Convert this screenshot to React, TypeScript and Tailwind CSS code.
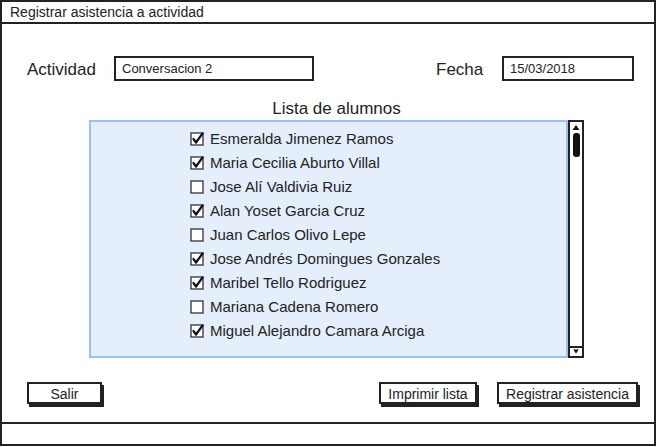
import { useState } from "react";

const alumnos: [string, boolean][] = [
  ["Esmeralda Jimenez Ramos", true],
  ["Maria Cecilia Aburto Villal", true],
  ["Jose Alí Valdivia Ruiz", false],
  ["Alan Yoset Garcia Cruz", true],
  ["Juan Carlos Olivo Lepe", false],
  ["Jose Andrés Domingues Gonzales", true],
  ["Maribel Tello Rodriguez", true],
  ["Mariana Cadena Romero", false],
  ["Miguel Alejandro Camara Arciga", true],
];

function Check({ on }: { on: boolean }) {
  return (
    <svg width="14" height="14" viewBox="0 0 14 14" className="shrink-0">
      <rect x="1" y="1" width="12" height="12" fill="#fff" stroke="#333" strokeWidth="1.3" />
      {on ? (
        <path d="M3.5 7 L6 10.5 L12.5 1.5" fill="none" stroke="#111" strokeWidth="2.2" strokeLinecap="round" strokeLinejoin="round" />
      ) : null}
    </svg>
  );
}

function Btn({ label, w }: { label: string; w: string }) {
  return (
    <button
      type="button"
      className={`${w} h-[22px] border-2 border-[#222] bg-white text-[14px] text-[#222] shadow-[2px_3px_0_#222]`}
    >
      {label}
    </button>
  );
}

export default function App() {
  const [lista, setLista] = useState(alumnos);

  return (
    <div className="flex h-[446px] w-[656px] flex-col border-2 border-[#222] bg-white font-['Liberation_Sans',Arial,sans-serif] text-[#222]">
      <div className="flex h-[22px] shrink-0 items-center border-b-2 border-[#222] pl-[8px] text-[14px]">
        Registrar asistencia a actividad
      </div>

      <main className="flex flex-1 flex-col">
        <div className="mt-[32px] flex h-[25px] items-center">
          <span className="ml-[25px] w-[87px] pt-[3px] text-[17px]">Actividad</span>
          <div className="flex h-[25px] w-[200px] items-center border-2 border-[#222] pl-[6px] text-[13px]">
            Conversacion 2
          </div>
          <span className="ml-[122px] w-[66px] pt-[3px] text-[17px]">Fecha</span>
          <div className="flex h-[25px] w-[132px] items-center border-2 border-[#222] pl-[6px] text-[13px]">
            15/03/2018
          </div>
        </div>

        <div className="mt-[18px] ml-[87px] w-[495px]">
          <div className="text-center text-[17px] leading-[20px]">Lista de alumnos</div>
          <div className="mt-[1px] flex h-[238px]">
            <ul className="flex flex-1 flex-col border-2 border-[#9cc0f2] bg-[#e5effc] pt-[5px] pl-[99px]">
              {lista.map(([name, on], i) => (
                <li
                  key={name}
                  className="flex h-[24px] cursor-pointer items-center gap-[6px] text-[15px]"
                  onClick={() =>
                    setLista((prev) => prev.map((a, j) => (j === i ? [a[0], !a[1]] : a)))
                  }
                >
                  <Check on={on} />
                  {name}
                </li>
              ))}
            </ul>
            <div className="flex w-[16px] flex-col border-2 border-[#222] bg-white">
              <svg width="12" height="10" viewBox="0 0 12 10">
                <path d="M2.5 8 L6 3 L9.5 8 Z" fill="#111" />
              </svg>
              <div className="mx-auto mt-[1px] h-[24px] w-[7px] rounded-[3px] bg-[#111]" />
              <div className="flex-1" />
              <svg width="12" height="10" viewBox="0 0 12 10" className="border-t-2 border-[#222]">
                <path d="M2.5 2 L6 7 L9.5 2 Z" fill="#111" />
              </svg>
            </div>
          </div>
        </div>

        <div className="mt-[24px] flex items-center">
          <div className="ml-[25px]">
            <Btn label="Salir" w="w-[75px]" />
          </div>
          <div className="ml-[277px]">
            <Btn label="Imprimir lista" w="w-[98px]" />
          </div>
          <div className="ml-[20px]">
            <Btn label="Registrar asistencia" w="w-[141px]" />
          </div>
        </div>
      </main>

      <div className="h-[22px] shrink-0 border-t-2 border-[#222]" />
    </div>
  );
}
